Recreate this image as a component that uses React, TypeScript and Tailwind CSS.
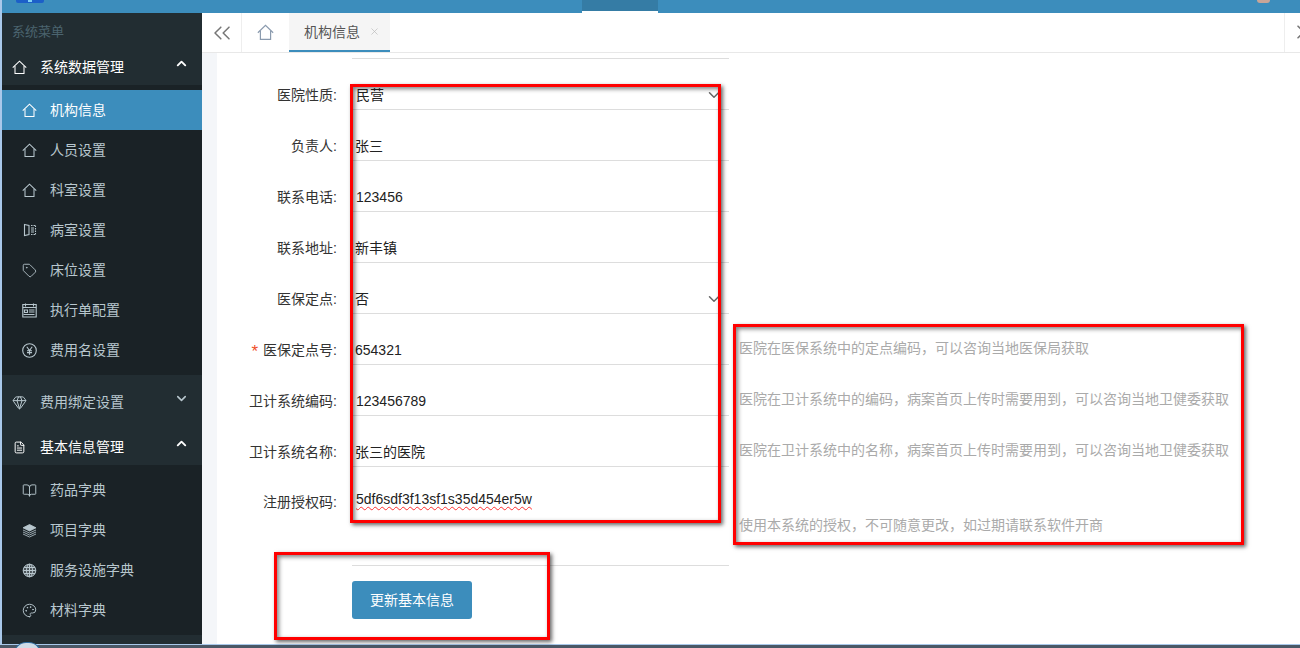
import React from "react";
import { ChevronUp, ChevronDown, ChevronsLeft, ChevronsRight, Tag, Gem, FileText, BookOpen, Palette, X } from "lucide-react";

const HomeIcon = ({ size = 16, className = "" }: { size?: number; className?: string }) => (
  <svg width={size} height={size} viewBox="0 0 16 16" fill="none" stroke="currentColor" strokeWidth="1.1" className={className}>
    <path d="M0.8 8.2 L8 1.2 L15.2 8.2" />
    <path d="M3.2 6.4 V14.5 H12.8 V6.4" />
  </svg>
);
const RoomIcon = () => (
  <svg width="14" height="14" viewBox="0 0 14 14" fill="none" stroke="currentColor" strokeWidth="1.1">
    <path d="M1.5 1.5 L6 2.5 V11.5 L1.5 12.5 Z" />
    <path d="M8 2.5 H12.5 M8 11.5 H12.5 M12.5 2.5 V11.5" strokeDasharray="1.5 1" />
    <path d="M8 5 H11 M8 7 H11 M8 9 H11" />
  </svg>
);
const SheetIcon = () => (
  <svg width="15" height="15" viewBox="0 0 15 15" fill="none" stroke="currentColor" strokeWidth="1.1">
    <path d="M0.8 1.5 H14.2 V14 H0.8 Z" />
    <path d="M3.5 0.5 V3.5 M11.5 0.5 V3.5 M0.8 4.5 H14.2 M7 7 H12.5 M7 9 H12.5 M1.5 11.5 H12.5" />
    <path d="M2.5 7 H5.5 V9.5 H2.5 Z" />
  </svg>
);
const YenIcon = () => (
  <svg width="15" height="15" viewBox="0 0 15 15" fill="none" stroke="currentColor" strokeWidth="1.1">
    <circle cx="7.5" cy="7.5" r="6.8" />
    <path d="M4.8 3.8 L7.5 7.5 L10.2 3.8 M7.5 7.5 V11.8 M5 7.8 H10 M5 9.6 H10" />
  </svg>
);
const StackIcon = () => (
  <svg width="15" height="15" viewBox="0 0 15 15" fill="currentColor" stroke="currentColor" strokeWidth="0.8" strokeLinejoin="round">
    <path d="M7.5 1.5 L14 4.8 L7.5 8 L1 4.8 Z" />
    <path d="M1 7 L7.5 10 L14 7" fill="none" />
    <path d="M1 9 L7.5 12 L14 9" fill="none" />
    <path d="M1 11 L7.5 14 L14 11" fill="none" />
  </svg>
);
const GlobeIcon = () => (
  <svg width="15" height="15" viewBox="0 0 15 15" fill="currentColor" fillOpacity="0.3" stroke="currentColor" strokeWidth="1">
    <circle cx="7.5" cy="7.5" r="6.3" />
    <ellipse cx="7.5" cy="7.5" rx="3" ry="6.3" fill="none" />
    <path d="M7.5 1.2 V13.8 M1.2 7.5 H13.8 M2 4.5 H13 M2 10.5 H13" fill="none" />
  </svg>
);

const items1 = [
  { t: "机构信息", i: <HomeIcon size={15} />, active: true },
  { t: "人员设置", i: <HomeIcon size={15} /> },
  { t: "科室设置", i: <HomeIcon size={15} /> },
  { t: "病室设置", i: <RoomIcon /> },
  { t: "床位设置", i: <Tag size={15} strokeWidth={1.4} /> },
  { t: "执行单配置", i: <SheetIcon /> },
  { t: "费用名设置", i: <YenIcon /> },
];
const items2 = [
  { t: "药品字典", i: <BookOpen size={15} strokeWidth={1.5} /> },
  { t: "项目字典", i: <StackIcon /> },
  { t: "服务设施字典", i: <GlobeIcon /> },
  { t: "材料字典", i: <Palette size={15} strokeWidth={1.5} /> },
];

function Group({ icon, title, open, bright }: { icon: React.ReactNode; title: string; open: boolean; bright: boolean }) {
  return (
    <div className={`flex h-[45px] items-start bg-[#222d32] pl-[10px] ${bright ? "text-white" : "text-[#b8c7ce]"}`}>
      <span className="mt-[19px] flex h-4 w-[15px] items-center justify-center">{icon}</span>
      <span className="ml-[13px] mt-[17px] text-sm leading-5">{title}</span>
      <span className="ml-auto mr-[13px] mt-[16px]">
        {open ? <ChevronUp size={15} strokeWidth={3} /> : <ChevronDown size={15} strokeWidth={2.5} />}
      </span>
    </div>
  );
}

function Item({ t, i, active }: { t: string; i: React.ReactNode; active?: boolean }) {
  return (
    <div className={`flex h-10 items-center pl-5 text-sm ${active ? "bg-[#3c8dbc] text-white" : "text-[#b8c7ce]"}`}>
      <span className="flex w-[15px] justify-center">{i}</span>
      <span className="ml-[13px]">{t}</span>
    </div>
  );
}

const rows: { label: string; value: string; help?: string; select?: boolean; req?: boolean; vx?: string }[] = [
  { label: "医院性质:", value: "民营", select: true },
  { label: "负责人:", value: "张三", vx: "pl-[3px]" },
  { label: "联系电话:", value: "123456" },
  { label: "联系地址:", value: "新丰镇", vx: "pl-[3px]" },
  { label: "医保定点:", value: "否", select: true, vx: "pl-[3px]" },
  { label: "医保定点号:", value: "654321", req: true, help: "医院在医保系统中的定点编码，可以咨询当地医保局获取", vx: "pl-[3px]" },
  { label: "卫计系统编码:", value: "123456789", help: "医院在卫计系统中的编码，病案首页上传时需要用到，可以咨询当地卫健委获取" },
  { label: "卫计系统名称:", value: "张三的医院", help: "医院在卫计系统中的名称，病案首页上传时需要用到，可以咨询当地卫健委获取", vx: "pl-[3px]" },
];

function Row({ label, value, help, select, req, vx }: (typeof rows)[number]) {
  return (
    <div className="flex h-[51px] items-end leading-5">
      <div className="w-[135px] pb-[5px] pr-[15px] text-right text-[#333]">
        {req && <span className="mr-[5px] align-[-2px] text-[17px] leading-none text-[#f0502a]">*</span>}
        {label}
      </div>
      <div className={`flex h-[51px] w-[377px] items-end justify-between border-b border-[#dddddd] pb-[4px] text-[#222] ${vx ?? "pl-1"}`}>
        <span>{value}</span>
        {select && <ChevronDown size={18} strokeWidth={2} className="mb-[1px] mr-[6px] text-[#666]" />}
      </div>
      {help && <div className="ml-[10px] whitespace-nowrap pb-[7px] text-[#aaaaaa]">{help}</div>}
    </div>
  );
}

const RedBox = ({ className }: { className: string }) => (
  <div className={`pointer-events-none absolute border-[3px] border-[#ff0000] shadow-[2px_2px_4px_rgba(0,0,0,0.6),inset_2px_2px_4px_rgba(0,0,0,0.5)] ${className}`} />
);

export default function App() {
  return (
    <div
      className="relative flex h-[648px] w-[1300px] flex-col overflow-hidden bg-white text-sm"
      style={{ fontFamily: '"Liberation Sans","Noto Sans CJK SC",sans-serif' }}
    >
      <div className="flex h-[644px] min-h-0">
        <div className="w-[2px] bg-[#a9c8ea]" />
        <div className="flex w-[1298px] flex-col">
          <header className="flex h-[13px] shrink-0 items-start bg-[#3c8dbc]">
            <div className="ml-[14px] flex h-[3px] w-[28px] justify-center rounded-b-[2px] bg-[#1c5fc8]">
              <div className="h-[2px] w-1 bg-[#7fd0f5]" />
            </div>
            <div className="ml-[538px] h-[13px] w-[76px] border-b-2 border-white bg-[#357ca5]" />
            <div className="ml-[599px] h-[3px] w-[13px] rounded-b-full bg-[#c9a598]" />
          </header>
          <div className="flex min-h-0 flex-1">
            <aside className="w-[200px] shrink-0 bg-[#1a2226]">
              <div className="h-[27px] bg-[#222d32] pl-[10px] pt-[9px] text-[13px] leading-5 text-[#4b646f]">系统菜单</div>
              <Group icon={<HomeIcon size={15} />} title="系统数据管理" open bright />
              <div className="py-[5px]">
                {items1.map((x) => (
                  <Item key={x.t} {...x} />
                ))}
              </div>
              <Group icon={<Gem size={15} strokeWidth={1.6} />} title="费用绑定设置" open={false} bright={false} />
              <Group icon={<FileText size={13} strokeWidth={1.8} />} title="基本信息管理" open bright />
              <div className="py-[5px]">
                {items2.map((x) => (
                  <Item key={x.t} {...x} />
                ))}
              </div>
              <div className="h-[14px] bg-[#222d32]" />
            </aside>
            <main className="flex min-w-0 flex-1 flex-col">
              <nav className="flex h-10 shrink-0 items-stretch border-b border-[#e8e8e8] bg-white shadow-[0_1px_2px_rgba(0,0,0,0.04)]">
                <div className="flex w-10 items-center justify-center border-r border-[#eeeeee] text-[#777]">
                  <ChevronsLeft size={28} strokeWidth={1.3} />
                </div>
                <div className="flex w-[47px] items-center justify-center text-[#8a9aae]">
                  <HomeIcon size={17} />
                </div>
                <div className="flex w-[101px] items-center border-b-2 border-[#3c8dbc] bg-[#f5f5f5] pl-[15px] text-[#555]">
                  <span>机构信息</span>
                  <X size={11} strokeWidth={1.5} className="ml-[9px] text-[#bbbbbb]" />
                </div>
                <div className="flex-1" />
                <div className="w-[16px] overflow-hidden border-l border-[#eeeeee] pl-[6px] pt-[5px] text-[#777]">
                  <ChevronsRight size={28} strokeWidth={1.3} className="max-w-none" />
                </div>
              </nav>
              <div className="flex min-h-0 flex-1 bg-[#f4f6f9] pl-[15px]">
                <div className="flex-1 overflow-hidden bg-white">
                  <div className="ml-[135px] mt-[5px] h-px w-[377px] bg-[#dddddd]" />
                  <div>
                    {rows.map((r) => (
                      <Row key={r.label} {...r} />
                    ))}
                    <div className="flex h-[98px] items-start leading-5">
                      <div className="w-[135px] pr-[15px] pt-[25px] text-right text-[#333]">注册授权码:</div>
                      <div className="w-[377px] pl-1 pt-[22px] text-[#222]">
                        <span className="underline decoration-[#ff3030] decoration-wavy decoration-1 underline-offset-2">5df6sdf3f13sf1s35d454er5w</span>
                      </div>
                      <div className="ml-[10px] whitespace-nowrap pt-[48px] text-[#aaaaaa]">使用本系统的授权，不可随意更改，如过期请联系软件开商</div>
                    </div>
                  </div>
                  <div className="ml-[135px] w-[377px] border-t border-[#dddddd] pt-[15px]">
                    <button className="h-[38px] w-[120px] rounded-[3px] bg-[#3c8dbc] text-sm text-white">更新基本信息</button>
                  </div>
                </div>
              </div>
            </main>
          </div>
        </div>
      </div>
      <div className="h-px bg-[#a9c8ea]" />
      <div className="flex-1 bg-[#4a5866]" />
      <div className="absolute left-[14px] top-[642px] h-[12px] w-[27px] rounded-t-full border border-[#2f6ea3] bg-[#cfdbe6]" />
      <RedBox className="left-[350px] top-[84px] h-[439px] w-[371px]" />
      <RedBox className="left-[733px] top-[324px] h-[221px] w-[511px]" />
      <RedBox className="left-[274px] top-[552px] h-[88px] w-[276px]" />
    </div>
  );
}
